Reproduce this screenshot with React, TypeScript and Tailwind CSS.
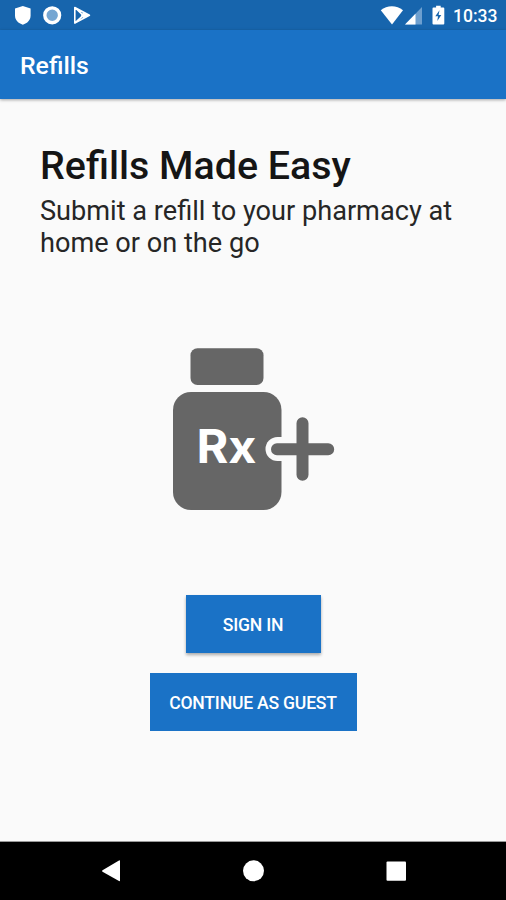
function StatusBar() {
  return (
    <div className="flex h-[30px] shrink-0 items-center justify-between bg-[#1765ad] text-white">
      <svg width="100" height="30" viewBox="0 0 100 30" fill="none">
        <path d="M22.800 6L30.600 8.500v7c0 4.600-3.300 7.800-7.800 9.200c-4.500-1.400-7.800-4.600-7.800-9.200v-7z" fill="#fff" />
        <circle cx="52.200" cy="15.300" r="7.400" fill="#75a6d2" stroke="#fff" strokeWidth="3.400" />
        <path d="M74.800 7.500v15.600l8.300-7.800zM74.800 7.500l14.600 7.800-14.600 7.800" fill="#fff" fillOpacity="0.35" stroke="#fff" strokeWidth="1.600" strokeLinejoin="round" />
        <path d="M83.300 12.600l6.200 2.700-6.200 2.800-2.400-2.800z" fill="#fff" />
      </svg>
      <div className="flex h-[30px] items-center">
        <svg width="72" height="30" viewBox="376 0 72 30">
          <path d="M380.800 10.200C387 4.900 396.700 4.900 403 10.200L392 24.500z" fill="#fff" />
          <path d="M422 7v17.500h-17z" fill="#6d9fcf" />
          <path d="M415.500 13.700v10.800H405z" fill="#fff" />
          <path d="M433.500 7.400h2.600V5.800h4.600v1.600h2.600q1 0 1 1v15.200q0 1-1 1h-9.800q-1 0-1-1V8.400q0-1 1-1z" fill="#fff" />
          <path d="M439.500 10.300l-4.200 6h2.700l-.7 4.700 4-6.100h-2.700z" fill="#1765ad" />
        </svg>
        <span className="w-[58px] pl-[5px] pt-[3px] text-[17.500px] leading-none font-medium">10:33</span>
      </div>
    </div>
  );
}

function RefillIllustration() {
  return (
    <svg className="mx-auto block" width="506" height="170" viewBox="0 344 506 170" role="img" aria-label="Prescription refill">
      <rect x="190.500" y="348.300" width="73" height="36.700" rx="7" fill="#666" />
      <rect x="173" y="392" width="108.500" height="118" rx="18" fill="#666" />
      <path d="M282 437h-4.500a12 12 0 0 0 0 24h4.500z" fill="#fafafa" />
      <path d="M277 449.200h51.200M302.500 423.300v51.500" stroke="#666" strokeWidth="12" strokeLinecap="round" />
      <text x="196.500" y="463" textLength="60" lengthAdjust="spacingAndGlyphs" className="font-[Inter,sans-serif] text-[46px] font-bold" fill="#fff">Rx</text>
    </svg>
  );
}

function NavigationBar() {
  return (
    <nav className="h-[59px] shrink-0 border-t border-[#999] bg-black pt-px">
      <svg width="506" height="57" viewBox="0 843 506 57" fill="#fff">
        <path d="M119 860.500q1-.5 1 .5v19.500q0 1-1 .500l-16.500-9.200q-1-.8 0-1.600z" />
        <circle cx="253.500" cy="870.800" r="10.500" />
        <rect x="386.500" y="861.500" width="19.500" height="19.300" rx="1" />
      </svg>
    </nav>
  );
}

export default function App() {
  return (
    <div className="flex h-[900px] w-[506px] flex-col overflow-hidden bg-[#fafafa] font-[Roboto,sans-serif]">
      <StatusBar />
      <header className="relative flex h-[68.500px] shrink-0 items-center bg-[#1a72c6] px-5 pt-[2px] text-white shadow-[0_1px_3px_rgba(0,0,0,0.35)]">
        <h1 className="text-[24.800px] font-medium">Refills</h1>
      </header>
      <main className="flex flex-1 flex-col">
        <section className="h-[245.500px] shrink-0 pl-10 pt-[43.500px] text-[#151515]">
          <h2 className="text-[39.400px] leading-[48px] font-medium whitespace-nowrap">Refills Made Easy</h2>
          <p className="pt-[5px] text-[27.150px] leading-[32px] whitespace-nowrap text-[#262626]">
            Submit a refill to your pharmacy at
            <br />
            home or on the go
          </p>
        </section>
        <RefillIllustration />
        <div className="flex flex-col items-center gap-5 pt-[81px] text-white">
          <button className="h-[58px] w-[135px] bg-[#1a72c6] pt-[2px] text-[17.600px] font-medium tracking-[-0.220px] shadow-[0_2px_3px_rgba(0,0,0,0.32)]">SIGN IN</button>
          <button className="h-[58px] w-[207px] bg-[#1a72c6] pt-[2px] text-[17.600px] font-medium tracking-[-0.220px] whitespace-nowrap">CONTINUE AS GUEST</button>
        </div>
      </main>
      <NavigationBar />
    </div>
  );
}
